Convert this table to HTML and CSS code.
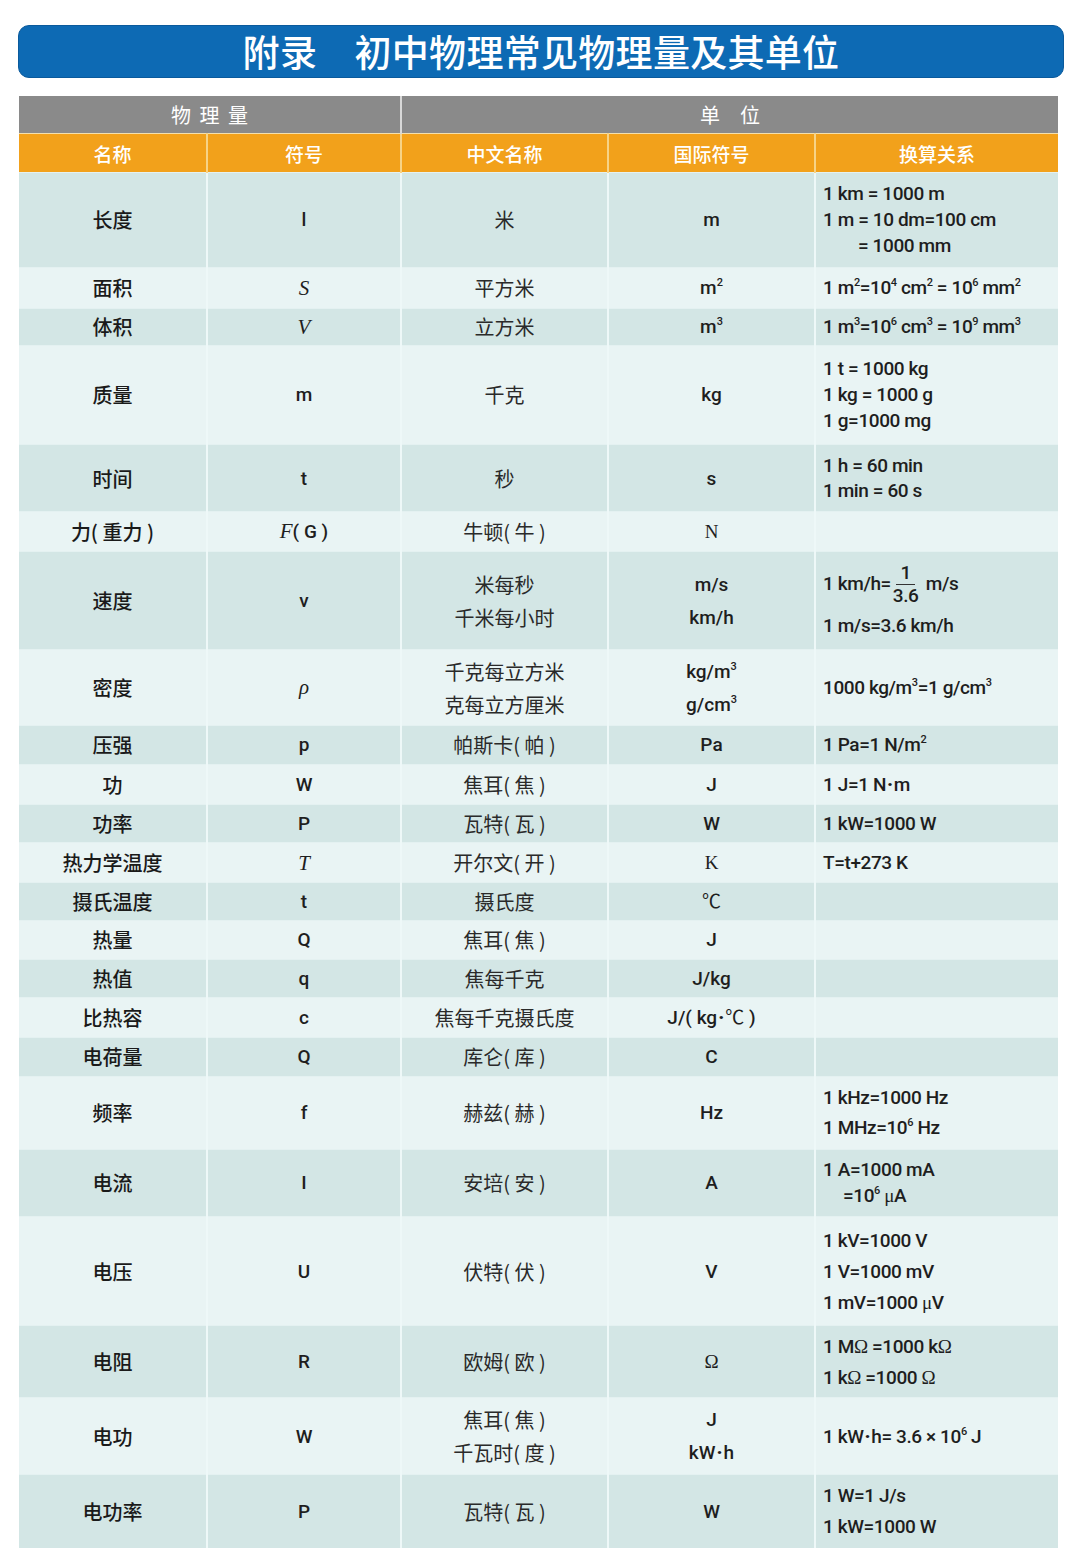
FILE: index.html
```html
<!DOCTYPE html>
<html lang="zh-CN">
<head>
<meta charset="utf-8">
<title>初中物理常见物理量及其单位</title>
<link rel="stylesheet" href="styles.css">
</head>
<body>
<div class="page">
  <div class="title">附录　初中物理常见物理量及其单位</div>
  <table class="tbl">
    <colgroup>
      <col class="c1"><col class="c2"><col class="c3"><col class="c4"><col class="c5">
    </colgroup>
    <thead>
      <tr class="grp">
        <th colspan="2" class="g1">物 理 量</th>
        <th colspan="3" class="g2">单　位</th>
      </tr>
      <tr class="cols">
        <th>名称</th><th>符号</th><th>中文名称</th><th>国际符号</th><th>换算关系</th>
      </tr>
    </thead>
    <tbody>
      <tr class="h95 lh26">
        <td class="nm">长度</td><td class="sy">l</td><td class="cn">米</td><td class="un">m</td>
        <td class="cv">1 km = 1000 m<br>1 m = 10 dm=100 cm<br><span class="ind2">= 1000 mm</span></td>
      </tr>
      <tr class="h41">
        <td class="nm">面积</td><td class="sy it">S</td><td class="cn">平方米</td><td class="un">m<sup>2</sup></td>
        <td class="cv">1 m<sup>2</sup>=10<sup>4</sup> cm<sup>2</sup> = 10<sup>6</sup> mm<sup>2</sup></td>
      </tr>
      <tr class="h37">
        <td class="nm">体积</td><td class="sy it">V</td><td class="cn">立方米</td><td class="un">m<sup>3</sup></td>
        <td class="cv">1 m<sup>3</sup>=10<sup>6</sup> cm<sup>3</sup> = 10<sup>9</sup> mm<sup>3</sup></td>
      </tr>
      <tr class="h99 lh26">
        <td class="nm">质量</td><td class="sy">m</td><td class="cn">千克</td><td class="un">kg</td>
        <td class="cv">1 t = 1000 kg<br>1 kg = 1000 g<br>1 g=1000 mg</td>
      </tr>
      <tr class="h67 lh25">
        <td class="nm">时间</td><td class="sy">t</td><td class="cn">秒</td><td class="un">s</td>
        <td class="cv">1 h = 60 min<br>1 min = 60 s</td>
      </tr>
      <tr class="h40">
        <td class="nm">力( 重力 )</td><td class="sy"><span class="it">F</span>( G )</td><td class="cn">牛顿( 牛 )</td><td class="un serif">N</td>
        <td class="cv"></td>
      </tr>
      <tr class="h98 lh33">
        <td class="nm">速度</td><td class="sy">v</td><td class="cn">米每秒<br>千米每小时</td><td class="un">m/s<br>km/h</td>
        <td class="cv lh26"><div class="fl">1 km/h=<span class="frac"><span class="num">1</span><span class="den">3.6</span></span> m/s</div><div>1 m/s=3.6 km/h</div></td>
      </tr>
      <tr class="h76 lh33">
        <td class="nm">密度</td><td class="sy it">ρ</td><td class="cn">千克每立方米<br>克每立方厘米</td><td class="un">kg/m<sup>3</sup><br>g/cm<sup>3</sup></td>
        <td class="cv">1000 kg/m<sup>3</sup>=1 g/cm<sup>3</sup></td>
      </tr>
      <tr class="h39">
        <td class="nm">压强</td><td class="sy">p</td><td class="cn">帕斯卡( 帕 )</td><td class="un">Pa</td>
        <td class="cv">1 Pa=1 N/m<sup>2</sup></td>
      </tr>
      <tr class="h40">
        <td class="nm">功</td><td class="sy">W</td><td class="cn">焦耳( 焦 )</td><td class="un">J</td>
        <td class="cv">1 J=1 N<b class="dot">·</b>m</td>
      </tr>
      <tr class="h38">
        <td class="nm">功率</td><td class="sy">P</td><td class="cn">瓦特( 瓦 )</td><td class="un">W</td>
        <td class="cv">1 kW=1000 W</td>
      </tr>
      <tr class="h40">
        <td class="nm">热力学温度</td><td class="sy it">T</td><td class="cn">开尔文( 开 )</td><td class="un serif">K</td>
        <td class="cv">T=t+273 K</td>
      </tr>
      <tr class="h38">
        <td class="nm">摄氏温度</td><td class="sy">t</td><td class="cn">摄氏度</td><td class="un serif">℃</td>
        <td class="cv"></td>
      </tr>
      <tr class="h39">
        <td class="nm">热量</td><td class="sy">Q</td><td class="cn">焦耳( 焦 )</td><td class="un">J</td>
        <td class="cv"></td>
      </tr>
      <tr class="h38">
        <td class="nm">热值</td><td class="sy">q</td><td class="cn">焦每千克</td><td class="un">J/kg</td>
        <td class="cv"></td>
      </tr>
      <tr class="h40">
        <td class="nm">比热容</td><td class="sy">c</td><td class="cn">焦每千克摄氏度</td><td class="un">J/( kg<b class="dot">·</b><span class="serif">℃</span> )</td>
        <td class="cv"></td>
      </tr>
      <tr class="h39">
        <td class="nm">电荷量</td><td class="sy">Q</td><td class="cn">库仑( 库 )</td><td class="un">C</td>
        <td class="cv"></td>
      </tr>
      <tr class="h73 lh30">
        <td class="nm">频率</td><td class="sy">f</td><td class="cn">赫兹( 赫 )</td><td class="un">Hz</td>
        <td class="cv">1 kHz=1000 Hz<br>1 MHz=10<sup>6</sup> Hz</td>
      </tr>
      <tr class="h67 lh26">
        <td class="nm">电流</td><td class="sy">I</td><td class="cn">安培( 安 )</td><td class="un">A</td>
        <td class="cv">1 A=1000 mA<br><span class="ind1">=10<sup>6</sup> <span class="serif">μ</span>A</span></td>
      </tr>
      <tr class="h109 lh31">
        <td class="nm">电压</td><td class="sy">U</td><td class="cn">伏特( 伏 )</td><td class="un">V</td>
        <td class="cv">1 kV=1000 V<br>1 V=1000 mV<br>1 mV=1000 <span class="serif">μ</span>V</td>
      </tr>
      <tr class="h72 lh31">
        <td class="nm">电阻</td><td class="sy">R</td><td class="cn">欧姆( 欧 )</td><td class="un serif">Ω</td>
        <td class="cv">1 M<span class="serif">Ω</span> =1000 k<span class="serif">Ω</span><br>1 k<span class="serif">Ω</span> =1000 <span class="serif">Ω</span></td>
      </tr>
      <tr class="h77 lh33">
        <td class="nm">电功</td><td class="sy">W</td><td class="cn">焦耳( 焦 )<br>千瓦时( 度 )</td><td class="un">J<br>kW<b class="dot">·</b>h</td>
        <td class="cv">1 kW<b class="dot">·</b>h= 3.6 × 10<sup>6</sup> J</td>
      </tr>
      <tr class="h73 lh31">
        <td class="nm">电功率</td><td class="sy">P</td><td class="cn">瓦特( 瓦 )</td><td class="un">W</td>
        <td class="cv">1 W=1 J/s<br>1 kW=1000 W</td>
      </tr>
    </tbody>
  </table>
</div>
</body>
</html>
```

FILE: styles.css
```css
html, body {
  margin: 0;
  padding: 0;
  background: #ffffff;
}

.page {
  width: 1080px;
  padding-top: 25px;
  font-family: Roboto, "Noto Sans CJK SC", sans-serif;
  color: #1e1e1e;
}

.title {
  margin-left: 18px;
  width: 1046px;
  height: 53px;
  box-sizing: border-box;
  border-radius: 11px;
  background: #0d6ab4;
  border: 1px solid #0a5a9c;
  color: #ffffff;
  font-family: "Noto Sans CJK SC", sans-serif;
  font-weight: 500;
  font-size: 37px;
  line-height: 51px;
  text-align: center;
  letter-spacing: 0.3px;
}

.tbl {
  margin-top: 18px;
  margin-left: 19px;
  width: 1039px;
  table-layout: fixed;
  border-collapse: collapse;
  border-spacing: 0;
}

.c1 { width: 188px; }
.c2 { width: 194px; }
.c3 { width: 207px; }
.c4 { width: 207px; }
.c5 { width: 243px; }

th, td {
  padding: 0;
}

.grp th {
  height: 37px;
  background: #8a8a8a;
  color: #ffffff;
  font-family: "Noto Sans CJK SC", sans-serif;
  font-weight: 400;
  font-size: 20px;
  border-bottom: 1px solid #f3dfae;
}

.grp .g1 {
  letter-spacing: 2px;
  text-indent: 2px;
}

.grp .g2 {
  border-left: 2px solid #d8d8d8;
}

.cols th {
  height: 38px;
  background: #f2a11b;
  color: #ffffff;
  font-family: "Noto Sans CJK SC", sans-serif;
  font-weight: 500;
  font-size: 19px;
  border-left: 2px solid #f7d387;
}

.cols th:first-child {
  border-left: none;
}

tbody tr:nth-child(odd) td {
  background: #d3e6e5;
}

tbody tr:nth-child(even) td {
  background: #e9f4f4;
}

tbody td {
  text-align: center;
  vertical-align: middle;
  border-left: 2px solid #eef8f8;
  border-top: 1px solid #e4f1f1;
  font-size: 19px;
  line-height: 24px;
}

tbody td:first-child {
  border-left: none;
}

.nm {
  font-family: "Noto Sans CJK SC", sans-serif;
  font-weight: 500;
  font-size: 20px;
  color: #1a1a1a;
}

.cn {
  font-family: "Noto Sans CJK SC", sans-serif;
  font-weight: 400;
  font-size: 20px;
  color: #2a2a2a;
}

.sy {
  font-family: Roboto, sans-serif;
  font-weight: 500;
  font-size: 19px;
}

.un {
  font-family: Roboto, "Noto Sans CJK SC", sans-serif;
  font-weight: 500;
  font-size: 19px;
}

.it {
  font-family: "Liberation Serif", serif;
  font-style: italic;
  font-weight: 400;
  font-size: 21px;
}

.serif {
  font-family: "Liberation Serif", "Noto Sans CJK SC", serif;
  font-weight: 400;
}

.dot {
  font-weight: 900;
  padding: 0 1px;
}

.cv {
  text-align: left;
  padding-left: 7px;
  font-family: Roboto, sans-serif;
  font-weight: 500;
  font-size: 19px;
  letter-spacing: -0.4px;
  color: #1e1e1e;
}

sup {
  font-size: 11px;
  line-height: 0;
  vertical-align: 8px;
}

.ind1 { padding-left: 20px; }
.ind2 { padding-left: 35px; }

.frac {
  display: inline-flex;
  flex-direction: column;
  align-items: center;
  vertical-align: middle;
  margin: 0 3px 0 2px;
  line-height: 22px;
}

.frac .num {
  display: block;
  padding: 0 4px;
  border-bottom: 1px solid #333;
}

.frac .den {
  display: block;
}

.fl {
  margin-bottom: 6px;
}

.h37 { height: 37px; }
.h38 { height: 38px; }
.h39 { height: 39px; }
.h40 { height: 40px; }
.h41 { height: 41px; }
.h67 { height: 67px; }
.h72 { height: 72px; }
.h73 { height: 73px; }
.h76 { height: 76px; }
.h77 { height: 77px; }
.h95 { height: 95px; }
.h98 { height: 98px; }
.h99 { height: 99px; }
.h109 { height: 109px; }

.lh25 td { line-height: 25px; }
.lh26 td { line-height: 26px; }
.lh30 td { line-height: 30px; }
.lh31 td { line-height: 31px; }
.lh33 td { line-height: 33px; }
.lh33 td.lh26 { line-height: 26px; }
```
